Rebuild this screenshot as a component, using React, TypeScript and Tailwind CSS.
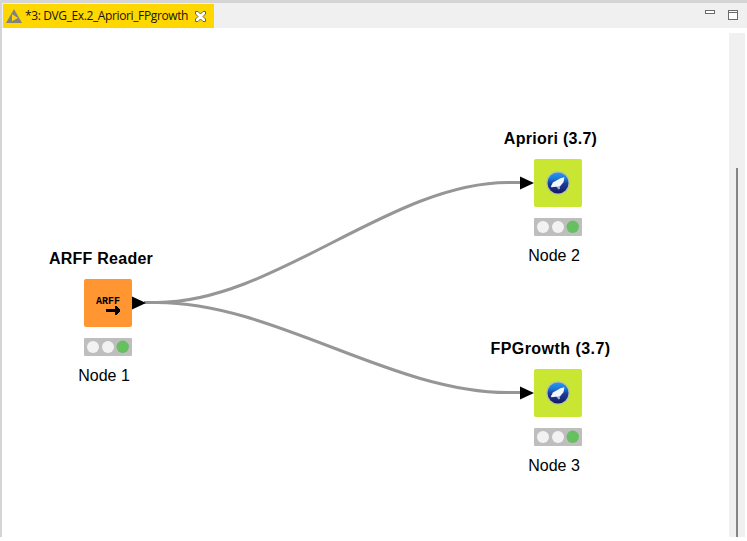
import React from "react";

const SANS = "font-['Liberation_Sans',Arial,sans-serif]";

function TrafficLight() {
  return (
    <svg className="mt-[11px] block" width="48" height="18" viewBox="0 0 48 18">
      <rect width="48" height="18" rx="1" fill="#bebebe" />
      <circle cx="9" cy="9" r="6" fill="#f2f2f2" />
      <circle cx="24" cy="9" r="6" fill="#f2f2f2" />
      <circle cx="38.7" cy="8.8" r="6.2" fill="#66c060" />
    </svg>
  );
}

function WekaIcon() {
  return (
    <svg width="24" height="24" viewBox="0 0 24 24">
      <defs>
        <linearGradient id="globe" x1="0" y1="0" x2="0" y2="1">
          <stop offset="0" stopColor="#2497f4" />
          <stop offset="0.3" stopColor="#1b78d8" />
          <stop offset="0.5" stopColor="#1b3fa0" />
          <stop offset="1" stopColor="#151a62" />
        </linearGradient>
      </defs>
      <circle cx="12" cy="12" r="11.7" fill="#b4bfa8" />
      <circle cx="12" cy="12" r="10.5" fill="url(#globe)" />
      <path d="M18.3 6.3 L14.5 7.3 L10 9.8 L6.8 11.5 L6.2 13 L4.8 15.5 L5.6 16.2 L9.5 15.8 L12 16 L14 15.6 L15.5 13.5 L17.3 11.5 L18 9Z" fill="#f2f5fb" />
      <path d="M10.5 15.8 L12.5 18.5 L14 17.8 L13.8 15.5Z" fill="#a3b3d8" />
    </svg>
  );
}

function Node({ title, label, place, spacing, reader }: { title: string; label: string; place: string; spacing: string; reader?: boolean }) {
  return (
    <div className={`absolute flex w-[160px] flex-col items-center text-black ${SANS} ${place}`}>
      <div className={`h-[30px] whitespace-nowrap text-[16px] leading-[20px] font-bold ${reader ? "mr-[14px]" : "mr-[15px]"} ${spacing}`}>{title}</div>
      <div className={`relative flex h-12 w-12 items-center justify-center rounded-[2px] ${reader ? "bg-[#ff9632]" : "bg-[#c8e632]"}`}>
        {reader ? (
          <div className="flex flex-col items-end pt-[5px]">
            <span className="font-['Liberation_Mono',monospace] text-[10px] leading-[9px] font-bold">ARFF</span>
            <svg width="14" height="9" viewBox="0 0 14 9" shapeRendering="crispEdges">
              <path d="M0 3H9V0H11V1H12V2H13V3H14V6H13V7H12V8H11V9H9V6H0Z" />
            </svg>
          </div>
        ) : (
          <div className="-mt-px -ml-px"><WekaIcon /></div>
        )}
        <svg className={`absolute top-[17px] ${reader ? "left-[48px]" : "left-[-14px]"}`} width="14" height="14" viewBox="0 0 14 14">
          <path d="M0 0.5 L14 7 L0 13.5Z" />
        </svg>
      </div>
      <TrafficLight />
      <div className="mt-[10px] -ml-2 text-[16px] leading-[20px]">{label}</div>
    </div>
  );
}

export default function App() {
  return (
    <div className="flex h-[541px] w-[747px] flex-col overflow-hidden bg-white">
      <div className="h-[537px] border-t-[3px] border-l-2 border-[#d5d5d5]">
        <div className="flex h-[25px] items-start justify-between bg-[#f0f0f0] pl-px">
          <div className="mt-px flex h-6 w-[211px] items-center bg-[#ffd700] pl-[3px]">
            <svg width="16" height="14" viewBox="0 0 16 14">
              <path d="M8 0 L16 14 H0Z" fill="#828282" />
              <path d="M6 5.3 L12 9 L6 12.3Z" fill="#ffd700" />
            </svg>
            <span className="ml-[3px] w-[164px] whitespace-nowrap font-['Open_Sans','Noto_Sans',sans-serif] text-[12px] leading-[16px] tracking-[-0.38px] text-[#141414]">*3: DVG_Ex.2_Apriori_FPgrowth</span>
            <svg className="ml-[6px]" width="11" height="11" viewBox="0 0 11 11">
              <path d="M.5 .5H3L5.5 3L8 .5H10.5V3L8 5.5L10.5 8V10.5H8L5.5 8L3 10.5H.5V8L3 5.5L.5 3Z" fill="#fff" stroke="#66644f" />
            </svg>
          </div>
          <div className="mr-[9px] mt-[7px] flex gap-[13px]">
            <div className="h-[4px] w-[10px] border border-[#6a6a6a] bg-white" />
            <div className="h-[10px] w-[10px] border border-[#6a6a6a] bg-white pt-px"><div className="h-px bg-[#6a6a6a]" /></div>
          </div>
        </div>
        <div className="flex h-[509px]">
          <div className="relative w-[727px]">
            <svg className="absolute inset-0" width="727" height="509" viewBox="2 28 727 509" fill="none" stroke="#969696" strokeWidth="3">
              <path d="M144 302.5H157C274 302.5 391 182.5 508 182.5H522" />
              <path d="M144 302.5H157C274 302.5 391 392.5 508 392.5H522" />
            </svg>
            <Node title="ARFF Reader" label="Node 1" place="left-[26px] top-[221px]" spacing="tracking-[0.25px]" reader />
            <Node title="Apriori (3.7)" label="Node 2" place="left-[476px] top-[101px]" spacing="tracking-[0.27px]" />
            <Node title="FPGrowth (3.7)" label="Node 3" place="left-[476px] top-[311px]" spacing="tracking-[0.45px]" />
          </div>
          <div className="mt-[5px] w-4 bg-[#f0f0f0] pl-[7px] pt-[135px]">
            <div className="h-[369px] w-[2px] bg-[#858585]" />
          </div>
        </div>
      </div>
    </div>
  );
}
